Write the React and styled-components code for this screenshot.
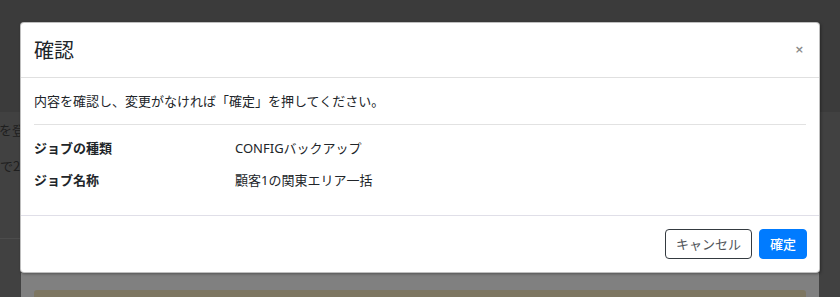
import React from "react";
import styled, { createGlobalStyle } from "styled-components";

const Global = createGlobalStyle`
  html, body { margin: 0; padding: 0; }
  body {
    font-family: "Noto Sans", "Noto Sans CJK JP", sans-serif;
    background: #404040;
  }
`;

const Stage = styled.div`
  width: 840px;
  height: 297px;
  overflow: hidden;
  display: grid;
  grid-template-columns: 21px 798px 21px;
  background: linear-gradient(#3b3b3b 0 112px, #414141 112px 100%);
`;

const Strip = styled.div`
  overflow: hidden;
  display: flex;
  flex-direction: column;
  padding-top: ${(p) => p.$top}px;
`;

const StripText = styled.div`
  height: ${(p) => p.$h}px;
  line-height: 20px;
  font-size: 13px;
  color: #1f1f1f;
  white-space: nowrap;
  font-family: "Noto Sans CJK JP", sans-serif;
`;

const StripRule = styled.div`
  height: 30px;
  border-top: 1px solid #4c4c4c;
`;

const Center = styled.div`
  display: flex;
  flex-direction: column;
  padding-top: 22px;
`;

const Modal = styled.div`
  background: #fff;
  border-radius: 4px;
  border: 1px solid rgba(0, 0, 0, 0.25);
  box-shadow: 1px 1px 3px rgba(0, 0, 0, 0.35);
  display: flex;
  flex-direction: column;
  margin: 0 -1px;
  position: relative;
  z-index: 1;
`;

const Header = styled.div`
  height: 54px;
  display: flex;
  align-items: center;
  justify-content: space-between;
  padding: 0 13px;
  border-bottom: 1px solid #e0e0e0;
`;

const Title = styled.h5`
  margin: 0;
  font-size: 20px;
  font-weight: 400;
  color: #212529;
  font-family: "Noto Sans CJK JP", sans-serif;
  line-height: 30px;
`;

const Close = styled.button`
  border: 0;
  background: none;
  padding: 0;
  margin-right: 2px;
  font-size: 11px;
  font-weight: 700;
  color: #8a8a8a;
  line-height: 12px;
  cursor: pointer;
  font-family: "DejaVu Sans", sans-serif;
`;

const Body = styled.div`
  padding: 13px 13px 20px;
  color: #212529;
  font-size: 13px;
  font-family: "Noto Sans CJK JP", sans-serif;
`;

const Message = styled.p`
  margin: 0;
  line-height: 20px;
`;

const Divider = styled.hr`
  margin: 13px 0 6px;
  border: 0;
  border-top: 1px solid #e2e2e2;
`;

const Row = styled.div`
  display: grid;
  grid-template-columns: 201px 1fr;
  height: 32px;
  align-items: center;
`;

const Label = styled.div`
  font-weight: 700;
`;

const Value = styled.div`
  font-family: "Noto Sans", "Noto Sans CJK JP", sans-serif;
`;

const Footer = styled.div`
  height: 56px;
  border-top: 1px solid #e0dfe8;
  display: flex;
  align-items: center;
  justify-content: flex-end;
  gap: 7px;
  padding: 0 12px 0 13px;
`;

const Button = styled.button`
  height: 30px;
  padding: 0 10px;
  border-radius: 4px;
  font-size: 13px;
  font-family: "Noto Sans CJK JP", sans-serif;
  line-height: 28px;
  cursor: pointer;
  border: 1px solid ${(p) => (p.$primary ? "#007bff" : "#343a40")};
  background: ${(p) => (p.$primary ? "#007bff" : "#fff")};
  color: ${(p) => (p.$primary ? "#fff" : "#505459")};
  font-weight: ${(p) => (p.$primary ? 500 : 400)};
`;

const Lower = styled.div`
  flex: 1;
  background: #808080;
  padding: 17px 13px 0;
`;

const Bar = styled.div`
  height: 20px;
  background: #7d7661;
  border-radius: 3px 3px 0 0;
`;

export default function App() {
  return (
    <>
      <Global />
      <Stage>
        <Strip $top={120}>
          <StripText $h={36} style={{ marginLeft: -1 }}>を登録</StripText>
          <StripText $h={82}>で20</StripText>
          <StripRule />
        </Strip>
        <Center>
          <Modal>
            <Header>
              <Title>確認</Title>
              <Close aria-label="close">×</Close>
            </Header>
            <Body>
              <Message>内容を確認し、変更がなければ「確定」を押してください。</Message>
              <Divider />
              <Row>
                <Label>ジョブの種類</Label>
                <Value>CONFIGバックアップ</Value>
              </Row>
              <Row>
                <Label>ジョブ名称</Label>
                <Value>顧客1の関東エリア一括</Value>
              </Row>
            </Body>
            <Footer>
              <Button>キャンセル</Button>
              <Button $primary>確定</Button>
            </Footer>
          </Modal>
          <Lower>
            <Bar />
          </Lower>
        </Center>
        <Strip $top={0} />
      </Stage>
    </>
  );
}
